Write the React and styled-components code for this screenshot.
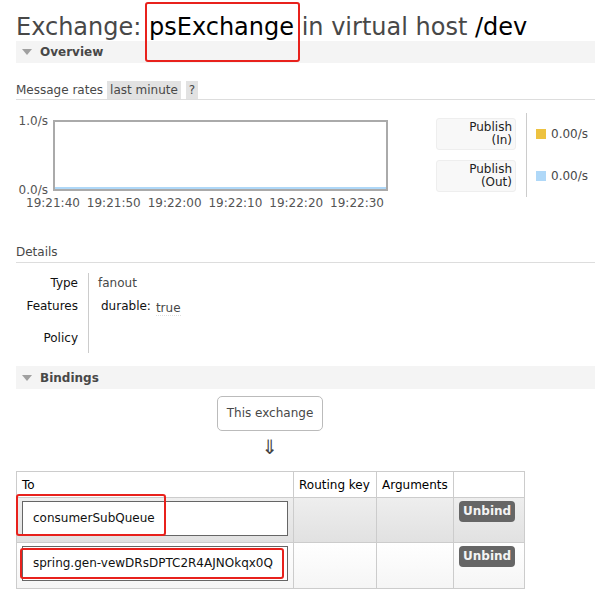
import React from "react";
import styled, { createGlobalStyle } from "styled-components";

const GlobalStyle = createGlobalStyle`
  body {
    margin: 0;
    font-family: "DejaVu Sans", Verdana, sans-serif;
    font-size: 12px;
    color: #484848;
    background: #fff;
    overflow: hidden;
  }
`;

const Page = styled.div`
  padding-left: 16px;
  width: 579px;
`;

const Title = styled.h1`
  margin: 13px 0 0;
  font-size: 24px;
  line-height: 28px;
  font-weight: normal;
  color: #484848;
  white-space: nowrap;
`;

const Dark = styled.span`
  color: #000;
  position: relative;
`;

// red annotation rectangles drawn over the screenshot
const Mark = styled.span`
  position: absolute;
  left: ${(p) => p.$left}px;
  top: ${(p) => p.$top}px;
  width: ${(p) => p.$width}px;
  height: ${(p) => p.$height}px;
  box-sizing: border-box;
  border: 2px solid #e8211c;
  border-radius: 3px;
  pointer-events: none;
`;

const SectionBar = styled.h2`
  margin: ${(p) => p.$top || 0}px 0 0;
  height: ${(p) => p.$height || 22}px;
  display: flex;
  align-items: center;
  padding-left: 6px;
  background: #f4f4f4;
  font-size: 12px;
  font-weight: bold;
  color: #484848;
  &::before {
    content: "";
    width: 0;
    height: 0;
    border-left: 5px solid transparent;
    border-right: 5px solid transparent;
    border-top: 6px solid #a0a0a0;
    margin-right: 8px;
  }
`;

const RateHeader = styled.div`
  margin-top: 18px;
  display: flex;
  align-items: center;
  height: 18px;
  border-bottom: 1px solid #ddd;
  line-height: 18px;
`;

const Chip = styled.span`
  background: #e2e2e2;
  padding: 0 3px;
  margin-left: ${(p) => p.$gap}px;
`;

const ChartRow = styled.div`
  display: flex;
  align-items: flex-start;
  margin-top: 13px;
`;

const Chart = styled.div`
  display: grid;
  grid-template-columns: 37px 335px;
  grid-template-rows: 71px auto;
  margin-top: 7px;
  color: #545454;
`;

const YAxis = styled.div`
  display: flex;
  flex-direction: column;
  justify-content: space-between;
  text-align: right;
  padding-right: 5px;
  margin: -6px 0;
  line-height: 14px;
`;

const Plot = styled.div`
  box-sizing: border-box;
  border: 2px solid #aaa;
  display: flex;
  flex-direction: column;
  justify-content: flex-end;
`;

const Series = styled.div`
  height: 2px;
  background: ${(p) => p.$color};
`;

const TimeAxis = styled.div`
  grid-column: 1 / span 2;
  display: flex;
  justify-content: space-between;
  padding: 5px 4px 0 10px;
  line-height: 14px;
`;

const Legend = styled.div`
  display: flex;
  margin-left: 48px;
`;

const LegendLabels = styled.div`
  display: flex;
  flex-direction: column;
  gap: 10px;
  padding: 5px 0;
`;

const LegendLabel = styled.div`
  box-sizing: border-box;
  width: 80px;
  height: 32px;
  background: #f8f8f8;
  border: 1px solid #eee;
  border-radius: 3px;
  display: flex;
  flex-direction: column;
  justify-content: center;
  align-items: flex-end;
  padding-right: 3px;
  line-height: 13px;
  color: #222;
`;

const LegendValues = styled.div`
  display: flex;
  flex-direction: column;
  gap: 10px;
  padding: 5px 0 5px 9px;
  margin-left: 10px;
  border-left: 1px solid #ccc;
`;

const LegendValue = styled.div`
  height: 32px;
  display: flex;
  align-items: center;
  gap: 5px;
`;

const Swatch = styled.span`
  width: 10px;
  height: 10px;
  background: ${(p) => p.$color};
`;

const SubHeading = styled.h3`
  margin: 35px 0 0;
  font-size: 12px;
  font-weight: normal;
  line-height: 14px;
  padding-bottom: 3px;
  border-bottom: 1px solid #ddd;
  color: #484848;
`;

const Facts = styled.div`
  margin-top: 10px;
  display: grid;
  grid-template-columns: 72px auto;
  width: max-content;
  line-height: 14px;
`;

const FactLabel = styled.div`
  height: ${(p) => p.$h}px;
  box-sizing: border-box;
  padding: 3px 10px 0 0;
  text-align: right;
  color: #111;
`;

const FactValue = styled.div`
  height: ${(p) => p.$h}px;
  box-sizing: border-box;
  padding: 3px 0 0 9px;
  border-left: 1px solid #ccc;
`;

const Feature = styled.div`
  display: flex;
  gap: 5px;
  padding-left: 3px;
  color: #111;
`;

const FeatureValue = styled.span`
  margin-top: 2px;
  color: #484848;
  border-bottom: 1px dotted #ddd;
`;

const Bindings = styled.div`
  width: 508px;
  display: flex;
  flex-direction: column;
  align-items: center;
`;

const Source = styled.div`
  margin-top: 7px;
  height: 35px;
  box-sizing: border-box;
  padding: 0 9px;
  border: 1px solid #bbb;
  border-radius: 5px;
  line-height: 33px;
`;

const Arrow = styled.div`
  margin-top: 6px;
  font-size: 20px;
  line-height: 20px;
  color: #444;
`;

const Table = styled.table`
  margin-top: 14px;
  width: 508px;
  border-collapse: collapse;
  table-layout: fixed;
  align-self: flex-start;
`;

const Th = styled.th`
  height: 25px;
  padding: 0 5px;
  border: 1px solid #ccc;
  text-align: left;
  font-weight: normal;
  color: #000;
  white-space: nowrap;
`;

const Row = styled.tr`
  height: ${(p) => p.$h}px;
  background: ${(p) =>
    p.$alt ? "linear-gradient(#eee, #e1e1e1)" : "linear-gradient(#fff, #f5f5f5)"};
`;

const Td = styled.td`
  padding: 3px 5px;
  border: 1px solid #ccc;
  vertical-align: top;
`;

const Queue = styled.div`
  position: relative;
  height: 35px;
  box-sizing: border-box;
  border: 1px solid #666;
  background: #fff;
  padding-left: 10px;
  line-height: 33px;
  color: #111;
  white-space: nowrap;
`;

const Unbind = styled.button`
  height: 21px;
  padding: 0 4px;
  border: none;
  border-radius: 4px;
  background: #666;
  color: #f4f4f4;
  font-family: "DejaVu Sans", Verdana, sans-serif;
  font-size: 12px;
  font-weight: bold;
  line-height: 21px;
`;

const times = ["19:21:40", "19:21:50", "19:22:00", "19:22:10", "19:22:20", "19:22:30"];

const bindings = [
  { queue: "consumerSubQueue", h: 45, mark: { left: -7, top: -8, width: 150, height: 42 } },
  { queue: "spring.gen-vewDRsDPTC2R4AJNOkqx0Q", h: 46, mark: { left: -3, top: 1, width: 264, height: 31 } },
];

export default function App() {
  return (
    <>
      <GlobalStyle />
      <Page>
        <Title>
          Exchange:{" "}
          <Dark>
            psExchange
            <Mark $left={-4} $top={-11} $width={155} $height={60} />
          </Dark>{" "}
          in virtual host <Dark>/dev</Dark>
        </Title>

        <SectionBar>Overview</SectionBar>
        <RateHeader>
          Message rates
          <Chip $gap={4}>last minute</Chip>
          <Chip $gap={5}>?</Chip>
        </RateHeader>

        <ChartRow>
          <Chart>
            <YAxis>
              <span>1.0/s</span>
              <span>0.0/s</span>
            </YAxis>
            <Plot>
              <Series $color="#afd8f8" />
            </Plot>
            <TimeAxis>
              {times.map((t) => (
                <span key={t}>{t}</span>
              ))}
            </TimeAxis>
          </Chart>
          <Legend>
            <LegendLabels>
              <LegendLabel>
                <span>Publish</span>
                <span>(In)</span>
              </LegendLabel>
              <LegendLabel>
                <span>Publish</span>
                <span>(Out)</span>
              </LegendLabel>
            </LegendLabels>
            <LegendValues>
              <LegendValue>
                <Swatch $color="#edc240" />
                0.00/s
              </LegendValue>
              <LegendValue>
                <Swatch $color="#afd8f8" />
                0.00/s
              </LegendValue>
            </LegendValues>
          </Legend>
        </ChartRow>

        <SubHeading>Details</SubHeading>
        <Facts>
          <FactLabel $h={23}>Type</FactLabel>
          <FactValue $h={23}>fanout</FactValue>
          <FactLabel $h={32}>Features</FactLabel>
          <FactValue $h={32}>
            <Feature>
              durable:<FeatureValue>true</FeatureValue>
            </Feature>
          </FactValue>
          <FactLabel $h={25}>Policy</FactLabel>
          <FactValue $h={25} />
        </Facts>

        <SectionBar $top={13} $height={23}>Bindings</SectionBar>
        <Bindings>
          <Source>This exchange</Source>
          <Arrow>⇓</Arrow>
          <Table>
            <colgroup>
              <col style={{ width: 277 }} />
              <col style={{ width: 83 }} />
              <col style={{ width: 77 }} />
              <col style={{ width: 71 }} />
            </colgroup>
            <thead>
              <tr>
                <Th>To</Th>
                <Th>Routing key</Th>
                <Th>Arguments</Th>
                <Th />
              </tr>
            </thead>
            <tbody>
              {bindings.map((b, i) => (
                <Row key={b.queue} $h={b.h} $alt={i === 0}>
                  <Td>
                    <Queue>
                      {b.queue}
                      <Mark
                        $left={b.mark.left}
                        $top={b.mark.top}
                        $width={b.mark.width}
                        $height={b.mark.height}
                      />
                    </Queue>
                  </Td>
                  <Td />
                  <Td />
                  <Td>
                    <Unbind>Unbind</Unbind>
                  </Td>
                </Row>
              ))}
            </tbody>
          </Table>
        </Bindings>
      </Page>
    </>
  );
}
